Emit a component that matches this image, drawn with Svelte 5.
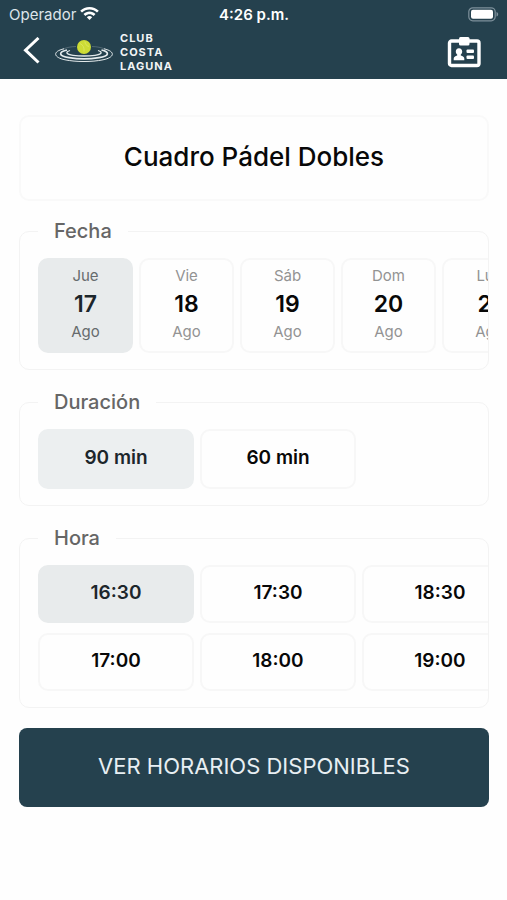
<script>
    let days = [
        { name: "Jue", number: 17, month: "Ago" },
        { name: "Vie", number: 18, month: "Ago" },
        { name: "Sáb", number: 19, month: "Ago" },
        { name: "Dom", number: 20, month: "Ago" },
        { name: "Lun", number: 21, month: "Ago" },
    ];
    let durations = ["90 min", "60 min"];
    let hours = ["16:30", "17:00", "17:30", "18:00", "18:30", "19:00"];

    let selectedDay = 17;
    let selectedDuration = "90 min";
    let selectedHour = "16:30";
</script>

<svelte:head>
    <title>Cuadro Pádel Dobles</title>
</svelte:head>

<header>
    <div class="status">
        <span class="carrier">
            Operador
            <svg width="19" height="14" viewBox="0 0 19 14" fill="#fff" aria-hidden="true">
                <path d="M9.500 0C5.900 0 2.600 1.400 0.200 3.700L2 5.600C4 3.700 6.600 2.600 9.500 2.600s5.500 1.100 7.500 3l1.800-1.900C16.400 1.400 13.100 0 9.500 0z" />
                <path d="M9.500 4.600c-2.300 0-4.400 0.900-6 2.400l1.900 1.900C6.500 7.900 7.900 7.200 9.500 7.200s3 0.700 4.100 1.700L15.500 7c-1.600-1.500-3.700-2.400-6-2.400z" />
                <path d="M9.500 9.100c-1 0-2 0.400-2.700 1.100l2.700 2.900 2.700-2.900c-0.700-0.700-1.700-1.100-2.700-1.100z" />
            </svg>
        </span>
        <span class="clock">4:26 p.m.</span>
        <svg class="battery" width="31" height="15" viewBox="0 0 31 15" aria-hidden="true">
            <rect x="0.800" y="0.800" width="26.400" height="13" rx="4" fill="none" stroke="#7d909b" stroke-width="1.200" />
            <rect x="3" y="2.800" width="22" height="9" rx="2" fill="#fff" />
            <path d="M28.500 5v4.600c1-0.400 1.700-1.200 1.700-2.300S29.500 5.400 28.500 5z" fill="#7d909b" />
        </svg>
    </div>
    <div class="bar">
        <button class="icon" aria-label="Volver">
            <svg width="18" height="30" viewBox="0 0 18 30" fill="none" stroke="#fff" stroke-width="3">
                <path d="M16.500 1L3.500 13.200l13 12.300" />
            </svg>
        </button>
        <a class="logo" href="/">
            <svg width="58" height="24" viewBox="0 0 58 24" fill="none" stroke="#e4eaec" aria-hidden="true">
                <path d="M9 8.800C-3 11.500-1.500 17.500 10 19.800c11 2.300 27 2.300 38 0 11.500-2.300 13-8.300 1-11" stroke-width="1" />
                <path d="M12 10C3 12 3.500 16 14 17.600c9 1.500 21 1.500 30 0C54.500 16 55 12 46.500 10" stroke-width="1.700" />
                <path d="M15 10.500c-5 1.500-4 4 3 4.800 7 0.900 15 0.900 22 0 7-0.800 8-3.300 3-4.800" stroke-width="1.300" />
                <path d="M8 9c4-1.600 8-2.300 13-2.500M37 6.500c5 0.200 9 0.900 13 2.500" stroke-width="0.600" opacity="0.400" />
                <circle cx="29" cy="7" r="7" fill="#cddc35" stroke="none" />
                <path d="M25 3.500c3 1.500 4.500 4 4 8M30 1.500c0 2.500 1.300 4.300 4 5" stroke="#dfe96b" stroke-width="0.700" />
            </svg>
            <span>Club<br />Costa<br />Laguna</span>
        </a>
        <button class="icon card" aria-label="Carnet de socio">
            <svg width="34" height="32" viewBox="0 0 34 32" fill="#fff">
                <rect x="2.500" y="5" width="29.500" height="24.500" rx="2" fill="none" stroke="#fff" stroke-width="3.400" />
                <rect x="12" y="1" width="10.500" height="8.500" rx="1.500" />
                <path d="M12 12.200c-2 0-3.200 1.400-3.200 3.200 0 1.400 0.600 2.500 1.400 3.100v1c-2 0.500-3.500 1.500-3.500 3v1.800h10.600v-1.800c0-1.500-1.500-2.500-3.500-3v-1c0.800-0.600 1.400-1.700 1.400-3.100 0-1.800-1.200-3.200-3.200-3.200z" />
                <rect x="19.500" y="13.500" width="7.500" height="3.500" rx="1" />
                <rect x="19.500" y="19.500" width="7.500" height="3.500" rx="1" />
            </svg>
        </button>
    </div>
</header>

<main>
    <h1>Cuadro Pádel Dobles</h1>

    <fieldset>
        <legend>Fecha</legend>
        <div class="scroller">
            {#each days as day}
                <button
                    class="option day"
                    class:selected={selectedDay === day.number}
                    aria-pressed={selectedDay === day.number}
                    on:click={() => (selectedDay = day.number)}
                >
                    <span>{day.name}</span>
                    <strong>{day.number}</strong>
                    <span>{day.month}</span>
                </button>
            {/each}
        </div>
    </fieldset>

    <fieldset>
        <legend>Duración</legend>
        <div class="scroller">
            {#each durations as duration}
                <button
                    class="option duration"
                    class:selected={selectedDuration === duration}
                    aria-pressed={selectedDuration === duration}
                    on:click={() => (selectedDuration = duration)}
                >
                    {duration}
                </button>
            {/each}
        </div>
    </fieldset>

    <fieldset>
        <legend>Hora</legend>
        <div class="scroller hours">
            {#each hours as hour}
                <button
                    class="option"
                    class:selected={selectedHour === hour}
                    aria-pressed={selectedHour === hour}
                    on:click={() => (selectedHour = hour)}
                >
                    {hour}
                </button>
            {/each}
        </div>
    </fieldset>

    <button class="submit">VER HORARIOS DISPONIBLES</button>
</main>

<style>
    :global(body) {
        background-color: #fefefe;
        font-family: "Inter", sans-serif;
        color: #080808;
    }
    button {
        font-family: inherit;
        color: inherit;
        cursor: pointer;
    }
    svg {
        display: block;
    }
    header {
        background-color: #25414e;
        color: #fff;
        padding-bottom: 3px;
    }
    .status {
        display: grid;
        grid-template-columns: 1fr auto 1fr;
        align-items: center;
        height: 28px;
        padding: 0 8px 0 9px;
        font-size: 15px;
    }
    .carrier {
        display: flex;
        align-items: center;
        gap: 4px;
        color: #dde5ea;
    }
    .clock {
        font-weight: 600;
    }
    .battery {
        justify-self: end;
    }
    .bar {
        display: flex;
        align-items: center;
        height: 48px;
        padding: 0 26px 0 22px;
    }
    .icon {
        padding: 0;
        border: none;
        background: none;
    }
    .card {
        margin-left: auto;
    }
    .logo {
        display: flex;
        align-items: center;
        gap: 7px;
        margin-left: 15px;
        color: #f2f5f6;
        font-size: 11px;
        font-weight: 700;
        line-height: 14px;
        letter-spacing: 1px;
        text-transform: uppercase;
        text-decoration: none;
    }
    main {
        display: flex;
        flex-direction: column;
        padding: 36px 18px 36px 19px;
    }
    h1 {
        margin: 0 0 18px;
        padding: 26px 16px 28px;
        border: 2px solid #f9f9f9;
        border-radius: 10px;
        font-size: 26px;
        font-weight: 500;
        line-height: 28px;
        text-align: center;
    }
    fieldset {
        min-width: 0;
        margin: 0 0 20px;
        padding: 15px 0 16px;
        border: 1px solid #f3f3f3;
        border-radius: 10px;
    }
    legend {
        margin-left: 18px;
        padding: 0 16px;
        color: #666;
        font-size: 20px;
        font-weight: 500;
        line-height: 24px;
    }
    .scroller {
        display: flex;
        gap: 6px;
        padding-left: 18px;
        overflow-x: auto;
        scrollbar-width: none;
    }
    .hours {
        display: grid;
        grid-template-rows: 58px 58px;
        grid-auto-flow: column;
        justify-content: start;
        gap: 10px 6px;
    }
    .option {
        flex: none;
        box-sizing: border-box;
        width: 156px;
        padding: 0 0 3px;
        border: 2px solid #f7f7f7;
        border-radius: 10px;
        background-color: #fefefe;
        font-size: 19px;
        font-weight: 600;
    }
    .duration {
        height: 60px;
    }
    .day {
        display: flex;
        flex-direction: column;
        align-items: center;
        justify-content: center;
        width: 95px;
        height: 95px;
        color: #939393;
        font-size: 15px;
        font-weight: 400;
        line-height: 24px;
    }
    .day strong {
        color: #080808;
        font-size: 23px;
        font-weight: 600;
        line-height: 32px;
    }
    .selected {
        border-color: #e8ebec;
        background-color: #e8ebec;
        color: #1c262b;
    }
    .day.selected {
        color: #666b6d;
    }
    .day.selected strong {
        color: #1c262b;
    }
    .duration.selected {
        border-color: #eceff0;
        background-color: #eceff0;
    }
    .submit {
        height: 79px;
        padding: 0 0 3px;
        border: none;
        border-radius: 8px;
        background-color: #25414e;
        color: #e8eff3;
        font-size: 22px;
        font-weight: 400;
    }
</style>
